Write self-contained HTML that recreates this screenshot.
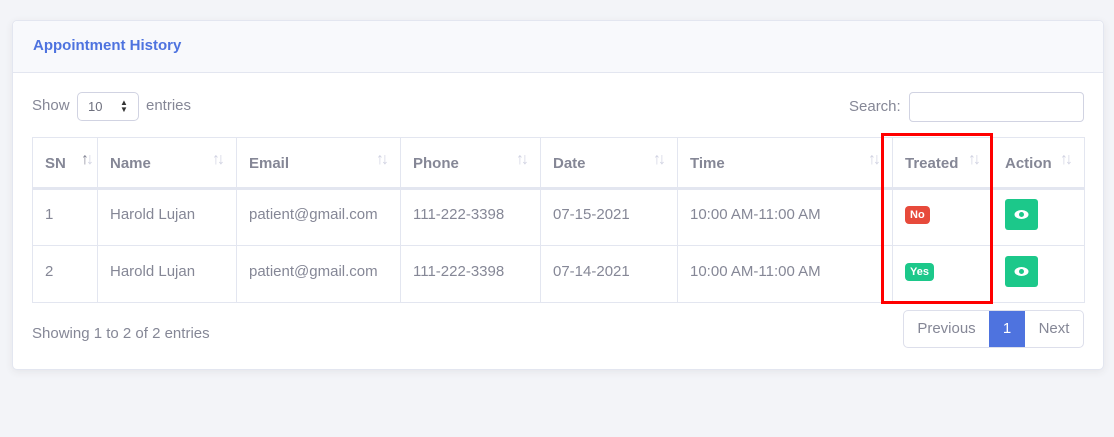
<!DOCTYPE html>
<html><head><style>
body{margin:0;width:1114px;height:437px;background:#f3f4f8;font-family:"Liberation Sans",sans-serif;color:#858796;position:relative;overflow:hidden}
.card{position:absolute;left:12px;top:20px;width:1092px;height:350px;background:#fff;border:1px solid #e3e6f0;border-radius:5px;box-sizing:border-box;box-shadow:0 2px 8px rgba(58,59,69,.08)}
.hd{height:51px;background:#f8f9fc;border-bottom:1px solid #e3e6f0;border-radius:5px 5px 0 0}
.hd span{position:absolute;left:20px;top:16px;color:#4e73df;font-weight:bold;font-size:15px}
.a{position:absolute;font-size:15px}
.sel{position:absolute;left:77px;top:92px;width:62px;height:29px;border:1px solid #d1d3e2;border-radius:5px;box-sizing:border-box;font-size:13px;color:#6e707e}
.srch{position:absolute;left:909px;top:92px;width:175px;height:30px;border:1px solid #d1d3e2;border-radius:4px;box-sizing:border-box}
table{position:absolute;left:32px;top:137px;width:1052px;border-collapse:collapse;font-size:15px;table-layout:fixed}
td,th{border:1px solid #e3e6f0;padding:0 12px;text-align:left;position:relative;box-sizing:border-box}
th{height:51px;font-weight:bold;border-bottom:3px solid #e3e6f0;padding-top:1px}
td{height:57px;padding-bottom:6px}
.s{position:absolute;right:14px;top:13px;color:#d1d3e2;font-size:16px;letter-spacing:-3px;font-weight:normal}
.b{display:inline-block;color:#fff;font-size:11px;font-weight:bold;padding:3px 5px;border-radius:4px}
.eye{display:inline-block;width:33px;height:31px;background:#1cc88a;border-radius:3px;position:relative;vertical-align:middle}
.pg{position:absolute;left:903px;top:310px;width:181px;height:38px;display:flex;border:1px solid #dddfeb;border-radius:5px;font-size:15px;box-sizing:border-box}
.pg div{line-height:36px;text-align:center}
.red{position:absolute;left:881px;top:133px;width:112px;height:171px;border:3px solid #f00;box-sizing:border-box}
</style></head><body>
<div class="card"><div class="hd"><span>Appointment History</span></div></div>
<div class="a" style="left:32px;top:97px">Show</div>
<div class="sel"><span style="position:absolute;left:10px;top:6px">10</span><span style="position:absolute;left:42px;top:6px;font-size:8px;line-height:7px;color:#333">▲<br>▼</span></div>
<div class="a" style="left:146px;top:97px">entries</div>
<div class="a" style="left:849px;top:98px">Search:</div>
<div class="srch"></div>
<table>
<tr><th style="width:65px">SN<span class="s" style="right:6px"><span style="color:#858796">↑</span>↓</span></th><th style="width:139px">Name<span class="s">↑↓</span></th><th style="width:164px">Email<span class="s">↑↓</span></th><th style="width:140px">Phone<span class="s">↑↓</span></th><th style="width:137px">Date<span class="s">↑↓</span></th><th style="width:215px">Time<span class="s">↑↓</span></th><th style="width:100px">Treated<span class="s">↑↓</span></th><th style="width:92px">Action<span class="s">↑↓</span></th></tr>
<tr><td>1</td><td>Harold Lujan</td><td>patient@gmail.com</td><td>111-222-3398</td><td>07-15-2021</td><td>10:00 AM-11:00 AM</td><td><span class="b" style="background:#e74a3b">No</span></td><td><span class="eye"><svg width="33" height="31"><ellipse cx="16.5" cy="15.5" rx="7" ry="4.5" fill="#fff"/><circle cx="16.5" cy="15.5" r="2.5" fill="#1cc88a"/></svg></span></td></tr>
<tr><td>2</td><td>Harold Lujan</td><td>patient@gmail.com</td><td>111-222-3398</td><td>07-14-2021</td><td>10:00 AM-11:00 AM</td><td><span class="b" style="background:#1cc88a">Yes</span></td><td><span class="eye"><svg width="33" height="31"><ellipse cx="16.5" cy="15.5" rx="7" ry="4.5" fill="#fff"/><circle cx="16.5" cy="15.5" r="2.5" fill="#1cc88a"/></svg></span></td></tr>
</table>
<div class="a" style="left:32px;top:325px">Showing 1 to 2 of 2 entries</div>
<div class="pg"><div style="width:85px">Previous</div><div style="background:#4e73df;color:#fff;width:36px">1</div><div style="width:58px">Next</div></div>
<div class="red"></div>
</body></html>
